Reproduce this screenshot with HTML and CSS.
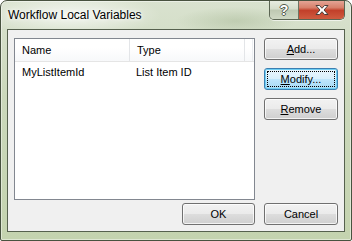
FILE: index.html
```
<!DOCTYPE html>
<html lang="en">
<head>
	<meta charset="UTF-8">
	<title>Workflow Local Variables</title>
	<link rel="stylesheet" href="styles.css">
</head>
<body>
	<div class="window">
		<div class="titlebar">
			<span class="caption">Workflow Local Variables</span>
			<div class="capbuttons">
				<div class="capbtn help">?</div>
				<div class="capbtn close">
					<svg width="16" height="12" viewBox="0 0 16 12">
						<path d="M2 1.5h3.5L8 4.3 10.5 1.5H14L10 6l4 4.5h-3.5L8 7.7 5.5 10.5H2L6 6z" fill="#fff" stroke="#4a3f3a" stroke-width="1" stroke-linejoin="round"/>
					</svg>
				</div>
			</div>
		</div>
		<div class="client">
			<div class="listview">
				<div class="header">
					<div class="col name">Name</div>
					<div class="col type">Type</div>
					<div class="col filler"></div>
				</div>
				<div class="row">
					<div class="col name">MyListItemId</div>
					<div class="col type">List Item ID</div>
				</div>
			</div>
			<div class="sidebuttons">
				<div class="btn"><span><u>A</u>dd...</span></div>
				<div class="btn focus"><span><u>M</u>odify...</span></div>
				<div class="btn"><span><u>R</u>emove</span></div>
			</div>
			<div class="btn ok"><span>OK</span></div>
			<div class="btn"><span>Cancel</span></div>
		</div>
	</div>
</body>
</html>
```

FILE: styles.css
```
body {
	margin: 0;
	background: #fff;
	font-family: "Liberation Sans", Arial, sans-serif;
	font-size: 11px;
	color: #000;
}
.window {
	width: 352px;
	height: 241px;
	box-sizing: border-box;
	display: flex;
	flex-direction: column;
	border: 1px solid #48523f;
	border-radius: 7px 7px 2px 2px;
	background: linear-gradient(180deg, #d9e2cf 0%, #cbd8bb 40%, #c4d3af 100%);
	box-shadow: inset 0 0 0 1px rgba(255, 255, 255, .45);
	overflow: hidden;
}
.titlebar {
	height: 28px;
	flex: none;
	display: flex;
	justify-content: space-between;
	align-items: flex-start;
	padding-left: 7px;
	background: radial-gradient(ellipse 90px 22px at 70px 14px, rgba(255, 255, 255, .7), rgba(255, 255, 255, 0)),
		radial-gradient(ellipse 60px 14px at 235px 20px, rgba(150, 170, 130, .35), rgba(150, 170, 130, 0));
}
.caption {
	margin-top: 7px;
	font-size: 12px;
	line-height: 15px;
	color: #000;
	text-shadow: 0 0 6px #fff, 0 0 3px #fff;
}
.capbuttons {
	display: flex;
	margin-top: -1px;
	margin-right: 6px;
	border: 1px solid #5b6553;
	border-top: none;
	border-radius: 0 0 5px 5px;
	overflow: hidden;
	box-shadow: 0 1px 0 rgba(255, 255, 255, .6);
}
.capbtn {
	height: 19px;
	display: flex;
	align-items: center;
	justify-content: center;
}
.help {
	width: 28px;
	border-right: 1px solid #6b7563;
	background: linear-gradient(180deg, #e9eee3 0%, #d6decc 45%, #bfc9b3 55%, #cfd8c4 100%);
	font: bold 14px "Liberation Sans", Arial, sans-serif;
	color: #fff;
	text-shadow: -1px 0 #525a4c, 1px 0 #525a4c, 0 -1px #525a4c, 0 1px #525a4c;
}
.close {
	width: 45px;
	background: linear-gradient(180deg, #e6a99b 0%, #d7806b 40%, #c2402a 55%, #cf5b3f 100%);
}
.client {
	flex: 1;
	margin: 0 6px 8px;
	border: 1px solid #56614e;
	background: #f0f0f0;
	padding: 8px 6px 6px;
	display: grid;
	grid-template-columns: 241px 74px;
	grid-template-rows: 162px 22px;
	column-gap: 9px;
	row-gap: 3px;
}
.listview {
	border: 1px solid #828790;
	background: #fff;
}
.header {
	display: flex;
	height: 22px;
	border-bottom: 1px solid #e5e5e5;
	background: linear-gradient(180deg, #fff 0%, #fff 40%, #f7f8fa 100%);
}
.header .col {
	line-height: 22px;
	border-right: 1px solid #e3e5e8;
}
.header .filler {
	width: 2px;
	border-right: 1px solid #eceef1;
}
.col {
	box-sizing: border-box;
	padding-left: 7px;
	white-space: nowrap;
}
.col.name {
	width: 115px;
}
.col.type {
	width: 115px;
}
.row {
	display: flex;
	margin-top: 2px;
	line-height: 17px;
}
.row .col.type {
	padding-left: 6px;
}
.sidebuttons {
	display: flex;
	flex-direction: column;
	gap: 8px;
}
.btn {
	height: 22px;
	box-sizing: border-box;
	display: flex;
	align-items: center;
	justify-content: center;
	border: 1px solid #707070;
	border-radius: 3px;
	background: linear-gradient(180deg, #f2f2f2 0%, #ebebeb 48%, #dddddd 52%, #cfcfcf 100%);
	box-shadow: inset 0 0 0 1px rgba(255, 255, 255, .75);
}
.btn.ok {
	width: 73px;
	justify-self: end;
}
.btn.focus {
	border-color: #3c7fb1;
	background: linear-gradient(180deg, #eaf6fd 0%, #d9f0fc 48%, #bee6fd 52%, #a7d9f5 100%);
	box-shadow: inset 0 0 0 1px #6fcff4;
}
.btn.focus span {
	flex: 1;
	align-self: stretch;
	margin: 2px;
	display: flex;
	align-items: center;
	justify-content: center;
	outline: 1px dotted #000;
	outline-offset: -1px;
}
```
